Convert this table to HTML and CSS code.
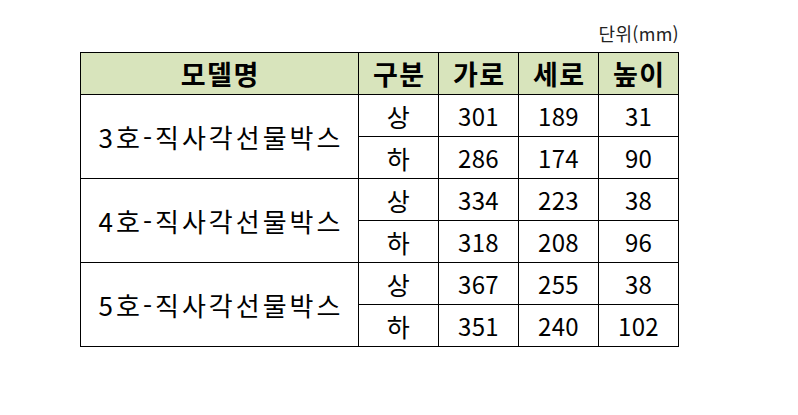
FILE: index.html
```html
<!DOCTYPE html>
<html lang="ko">
<head>
<meta charset="utf-8">
<link rel="stylesheet" href="styles.css">
</head>
<body>
<div class="wrap">
  <div class="unit">단위(mm)</div>
  <table class="spec">
    <colgroup>
      <col class="c-name"><col class="c-n"><col class="c-n"><col class="c-n"><col class="c-n">
    </colgroup>
    <thead>
      <tr><th>모델명</th><th>구분</th><th>가로</th><th>세로</th><th>높이</th></tr>
    </thead>
    <tbody>
      <tr><td rowspan="2" class="name">3호-직사각선물박스</td><td class="kind">상</td><td>301</td><td>189</td><td>31</td></tr>
      <tr><td class="kind">하</td><td>286</td><td>174</td><td>90</td></tr>
      <tr><td rowspan="2" class="name">4호-직사각선물박스</td><td class="kind">상</td><td>334</td><td>223</td><td>38</td></tr>
      <tr><td class="kind">하</td><td>318</td><td>208</td><td>96</td></tr>
      <tr><td rowspan="2" class="name">5호-직사각선물박스</td><td class="kind">상</td><td>367</td><td>255</td><td>38</td></tr>
      <tr><td class="kind">하</td><td>351</td><td>240</td><td>102</td></tr>
    </tbody>
  </table>
</div>
</body>
</html>
```
FILE: styles.css
```css
html, body {
  margin: 0;
  padding: 0;
  background: #fff;
}
body {
  font-family: "Noto Sans CJK KR", "Noto Sans", sans-serif;
  color: #000;
}
.wrap {
  width: 599px;
  padding: 21px 0 0 80px;
}
.unit {
  text-align: right;
  font-size: 18px;
  line-height: 25px;
  height: 31px;
  color: #222;
  letter-spacing: 0.3px;
}
.spec {
  border-collapse: collapse;
  width: 599px;
  table-layout: fixed;
}
.c-name { width: 278px; }
.c-n { width: 80px; }
.spec th, .spec td {
  border: 1px solid #000;
  height: 41px;
  padding: 0;
  text-align: center;
  vertical-align: middle;
  font-size: 24px;
  line-height: 30px;
}
.spec td {
  letter-spacing: 0.3px;
}
.spec th {
  background: #d8e4bc;
  font-weight: 700;
  font-size: 27px;
  letter-spacing: 1.5px;
  text-indent: 1.5px;
}
.spec td.kind {
  font-size: 25px;
}
.spec td.name {
  font-size: 26px;
  letter-spacing: 3px;
  text-indent: 3px;
}
```
